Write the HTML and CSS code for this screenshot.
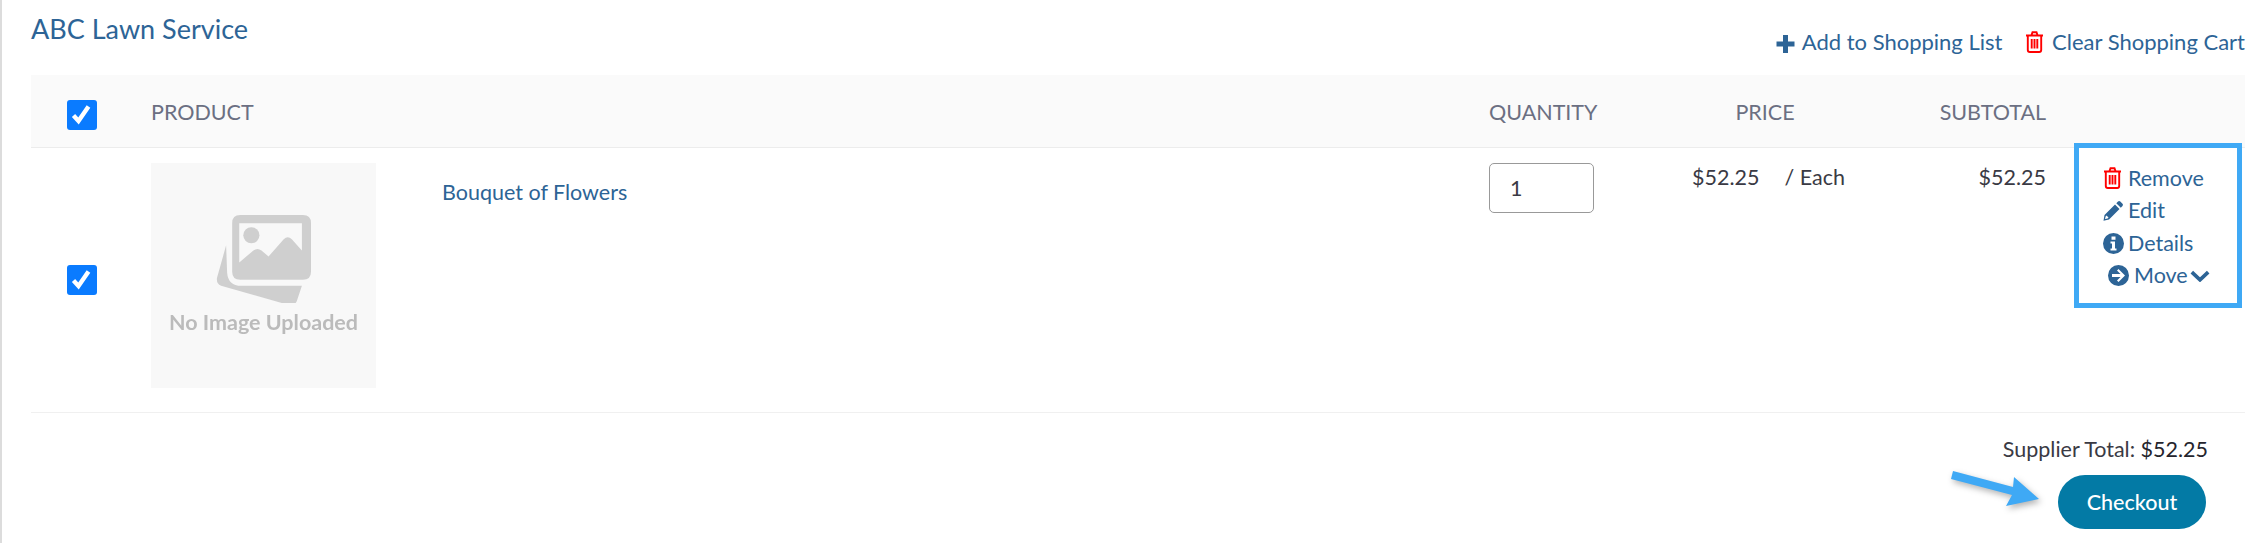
FILE: index.html
```html
<!DOCTYPE html>
<html>

<head>
    <meta charset="UTF-8">
    <title>Shopping Cart</title>
    <link rel="stylesheet" href="styles.css">
</head>

<body>
    <div class="cart">
        <div class="top">
            <h2 class="supplier">ABC Lawn Service</h2>
            <div class="topLinks">
                <a class="link">
                    <svg class="icon-plus" viewBox="0 0 18 18"><path d="M6.500 0h5v6.500H18v5h-6.500V18h-5v-6.500H0v-5h6.500z" fill="#2d6496"/></svg>
                    Add to Shopping List
                </a>
                <a class="link">
                    <svg class="icon-trash" viewBox="0 0 19 22"><use href="#trash"/></svg>
                    Clear Shopping Cart
                </a>
            </div>
        </div>

        <div class="row head">
            <div class="colCheck"><span class="check"><svg viewBox="0 0 30 30"><path d="M6.500 15.500l5 5.500 10-14.500" fill="none" stroke="#fff" stroke-width="4.400"/></svg></span></div>
            <div class="colProduct">PRODUCT</div>
            <div class="colQty">QUANTITY</div>
            <div class="colPrice">PRICE</div>
            <div class="colSub">SUBTOTAL</div>
            <div class="colAct"></div>
        </div>

        <div class="row item">
            <div class="colCheck"><span class="check"><svg viewBox="0 0 30 30"><path d="M6.500 15.500l5 5.500 10-14.500" fill="none" stroke="#fff" stroke-width="4.400"/></svg></span></div>
            <div class="colProduct product">
                <div class="noImage">
                    <svg viewBox="0 0 95 90">
                        <path d="M11 33L2 65q-1 6 4 8l67 19q6 1 8-4l5-15H26q-13 0-14-13z" fill="#cfcfcf"/>
                        <path fill-rule="evenodd" d="M25 3h62q8 0 8 8v48q0 8-8 8H25q-8 0-8-8V11q0-8 8-8zm-1 8v39l14-12q4-3 8 0l7 6 15-17q4-4 8 0l10 11V11z" fill="#cfcfcf"/>
                        <circle cx="36" cy="23" r="8" fill="#cfcfcf"/>
                    </svg>
                    <span>No Image Uploaded</span>
                </div>
                <a class="name">Bouquet of Flowers</a>
            </div>
            <div class="colQty"><input class="qty" type="text" value="1"></div>
            <div class="colPrice price"><span>$52.25</span><span>/ Each</span></div>
            <div class="colSub sub">$52.25</div>
            <div class="colAct">
                <div class="actions">
                    <a class="link"><svg class="icon-trash" viewBox="0 0 19 22"><use href="#trash"/></svg>Remove</a>
                    <a class="link"><svg class="ico" viewBox="0 0 21 21"><path d="M15 1.500q1.200-1 2.300 0l2.200 2.200q1 1.100 0 2.300l-1.700 1.700-4.500-4.500zM12 4.500l4.500 4.500L6 19.500l-5.500 1.200L1.500 15zM3.500 15.500l-.9.900-.6 2.600 2.600-.6.900-.9z" fill="#2d6496" fill-rule="evenodd"/></svg>Edit</a>
                    <a class="link"><svg class="ico" viewBox="0 0 21 21"><path fill-rule="evenodd" d="M10.500 0a10.500 10.500 0 1 1 0 21 10.500 10.500 0 0 1 0-21zM8.500 3.500v3.200h4V3.500zM7.500 8.500v2h1.500v5H7.500v2h6v-2h-1.500v-7z" fill="#2d6496"/></svg>Details</a>
                    <a class="link move"><svg class="ico" viewBox="0 0 21 21"><path fill-rule="evenodd" d="M10.500 0a10.500 10.500 0 1 1 0 21 10.500 10.500 0 0 1 0-21zM10.500 4L9 5.500l3.500 3.500H4v3h8.500L9 15.500l1.500 1.500 6.500-6.500z" fill="#2d6496"/></svg>Move <svg class="chevron" viewBox="0 0 18 11"><path d="M1.500 2l7.500 7 7.500-7" fill="none" stroke="#2d6496" stroke-width="3.400"/></svg></a>
                </div>
            </div>
        </div>

        <div class="footer">
            <div class="total">Supplier Total: <span>$52.25</span></div>
            <button class="checkout">Checkout</button>
        </div>

        <!-- arrow pointing at the checkout button -->
        <svg class="arrow" viewBox="0 0 90 45"><path d="M3 1l60 16 1-10 25 22-33 7 6-11L1 9z" fill="#3fa9f5"/></svg>
    </div>

    <svg class="defs" width="0" height="0">
        <symbol id="trash" viewBox="0 0 19 22">
            <path d="M6.500 4l1-2.700h4l1 2.700M1 4.500h17M2.800 4.500V19q0 2 2 2h9.400q2 0 2-2V4.500M6.700 8v9.500M9.500 8v9.500M12.300 8v9.500" fill="none" stroke="#f00" stroke-width="1.900"/>
        </symbol>
    </svg>
</body>

</html>
```

FILE: styles.css
```css
* {
    margin: 0;
    padding: 0;
    box-sizing: border-box;
}

body {
    background: #fff;
    font-family: "Lato", "Open Sans", sans-serif;
    font-size: 21.5px;
    color: #3a3a44;
}

.cart {
    position: relative;
    height: 543px;
    padding: 0 17px 0 29px;
    border-left: 2px solid #dcdcdc;
}

.link {
    color: #2d6496;
    text-decoration: none;
}

.top {
    display: flex;
    justify-content: space-between;
    height: 75px;
}

.supplier {
    font-size: 27px;
    font-weight: 400;
    color: #2d6496;
    padding-top: 14px;
    line-height: 30px;
}

.topLinks {
    display: flex;
    gap: 23px;
    padding-top: 29px;
    line-height: 26px;
    font-size: 22px;
}

.topLinks svg {
    vertical-align: -3px;
}

.topLinks .icon-trash {
    margin-right: 2px;
}

.icon-plus {
    width: 19px;
    height: 18px;
    margin-right: 2px;
}

.icon-trash {
    width: 19px;
    height: 22px;
    margin-right: 6px;
}

.row {
    display: flex;
}

.colCheck {
    width: 120px;
    padding-left: 36px;
}

.colProduct {
    flex: 1;
}

.colQty {
    width: 105px;
}

.colPrice {
    width: 242px;
}

.colSub {
    width: 210px;
    text-align: right;
}

.colAct {
    width: 199px;
    padding-left: 28px;
}

.head {
    height: 73px;
    padding-top: 2px;
    background: #fafafa;
    border-bottom: 1px solid #ececec;
    align-items: center;
    color: #6b6f82;
}

.head .check {
    margin-top: 6px;
}

.head .colPrice {
    padding-left: 100px;
    text-align: center;
}

.check {
    display: block;
    width: 30px;
    height: 30px;
    background: #0a7bff;
    border-radius: 3px;
}

.check svg {
    display: block;
}

.item {
    height: 265px;
    border-bottom: 1px solid #f0f0f0;
}

.item .colCheck {
    padding-top: 117px;
}

.product {
    display: flex;
    padding-top: 15px;
}

.noImage {
    width: 225px;
    height: 225px;
    background: #f8f8f8;
    padding-top: 49px;
    text-align: center;
    color: #bbb;
    font-weight: 700;
    font-size: 21.5px;
}

.noImage svg {
    display: block;
    width: 96px;
    height: 91px;
    margin-left: 64px;
    filter: blur(.4px);
}

.noImage span {
    display: block;
    margin-top: 6px;
    white-space: nowrap;
    filter: blur(.4px);
}

.name {
    color: #2d6496;
    margin-left: 66px;
    padding-top: 16px;
    line-height: 26px;
}

.item .colQty {
    padding-top: 15px;
}

.qty {
    display: block;
    width: 105px;
    height: 50px;
    border: 1px solid #999;
    border-radius: 5px;
    padding-left: 20px;
    font-family: inherit;
    font-size: 21.5px;
    color: #3a3a44;
}

.price {
    display: flex;
    gap: 25px;
    padding-top: 16px;
    padding-left: 98px;
    line-height: 26px;
    white-space: nowrap;
}

.sub {
    padding-top: 16px;
    line-height: 26px;
}

.actions {
    display: flex;
    flex-direction: column;
    align-items: flex-start;
    width: 168px;
    height: 165px;
    margin-top: -5px;
    padding: 14px 0 0 24px;
    border: 5px solid #3fa9f5;
    line-height: 32.3px;
    background: #fff;
}

.actions .link {
    white-space: nowrap;
}

.actions svg {
    vertical-align: -3px;
}

.ico {
    width: 21px;
    height: 21px;
    margin-right: 4px;
}

.move {
    margin-left: 5px;
}

.move .ico {
    margin-right: 5px;
}

.chevron {
    width: 20px;
    height: 12px;
    margin-left: -3px;
    vertical-align: 1px !important;
}

.footer {
    display: flex;
    flex-direction: column;
    align-items: flex-end;
    padding: 23px 37px 0 0;
}

.total {
    line-height: 26px;
}

.total span {
    color: #25252d;
}

.checkout {
    width: 148px;
    height: 54px;
    margin-top: 13px;
    margin-right: 2px;
    border: 0;
    border-radius: 27px;
    background: #037aa5;
    color: #fff;
    font-family: inherit;
    font-size: 21.5px;
    font-weight: 500;
}

.arrow {
    position: absolute;
    left: 1948px;
    top: 470px;
    width: 90px;
    height: 45px;
    filter: drop-shadow(2px 3px 3px rgba(0, 0, 0, .3));
}

.defs {
    position: absolute;
}
```
